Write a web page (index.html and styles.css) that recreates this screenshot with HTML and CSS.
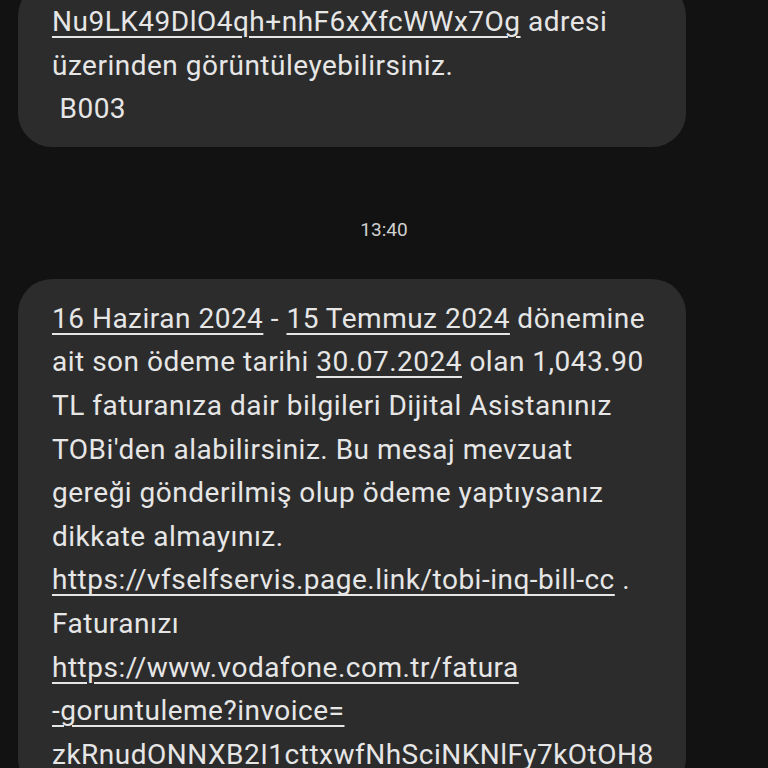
FILE: index.html
```html
<!DOCTYPE html>
<html lang="tr">
<head>
<meta charset="utf-8">
<title>Mesajlar</title>
<link rel="stylesheet" href="styles.css">
</head>
<body>
<main class="thread">
  <div class="bubble bubble-first">
    <p class="msg"><u>Nu9LK49DlO4qh+nhF6xXfcWWx7Og</u> adresi<br>üzerinden görüntüleyebilirsiniz.<br>&nbsp;B003</p>
  </div>
  <div class="stamp">13:40</div>
  <div class="bubble">
    <p class="msg"><u>16 Haziran 2024</u> - <u>15 Temmuz 2024</u> dönemine<br>ait son ödeme tarihi <u>30.07.2024</u> olan 1,043.90<br>TL faturanıza dair bilgileri Dijital Asistanınız<br>TOBi'den alabilirsiniz. Bu mesaj mevzuat<br>gereği gönderilmiş olup ödeme yaptıysanız<br>dikkate almayınız.<br><u>https://vfselfservis.page.link/tobi-inq-bill-cc</u> .<br>Faturanızı<br><u>https://www.vodafone.com.tr/fatura</u><br><u>-goruntuleme?invoice=</u><br><u>zkRnudONNXB2I1cttxwfNhSciNKNlFy7kOtOH8</u></p>
  </div>
</main>
</body>
</html>
```
FILE: styles.css
```css
html, body {
  margin: 0;
  padding: 0;
  background: #121212;
  height: 100%;
  overflow: hidden;
}
body {
  font-family: Roboto, "Noto Sans", sans-serif;
  color: #e6e6e6;
}
.thread {
  display: flex;
  flex-direction: column;
}
.bubble {
  background: #2c2c2c;
  border-radius: 34px;
  margin: 0 82px 0 18px;
  padding: 18px 30px 16px 34px;
}
.bubble-first {
  margin-top: -18px;
}
.msg {
  margin: 0;
  font-size: 28px;
  letter-spacing: 0.5px;
  line-height: 43.6px;
  white-space: nowrap;
}
.msg u {
  text-decoration: underline;
  text-decoration-thickness: 2px;
  text-underline-offset: 5px;
}
.stamp {
  margin: 71px 0 37px;
  text-align: center;
  font-size: 19px;
  line-height: 24px;
  color: #d0d0d0;
}
```
